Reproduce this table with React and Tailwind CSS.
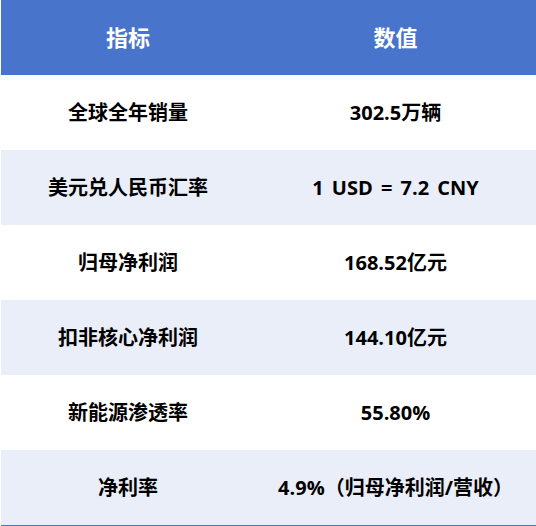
import React from 'react';

const rows = [
  ['全球全年销量', '302.5万辆'],
  ['美元兑人民币汇率', '1 USD = 7.2 CNY'],
  ['归母净利润', '168.52亿元'],
  ['扣非核心净利润', '144.10亿元'],
  ['新能源渗透率', '55.80%'],
  ['净利率', '4.9%（归母净利润/营收）'],
];

export default function App() {
  return (
    <div
      className="w-[536px] h-[526px] bg-white pl-px"
      style={{ fontFamily: '"Open Sans", "Noto Sans CJK SC", sans-serif' }}
    >
      <div className="border-b border-[#4874cb]">
        {/* 表头 */}
        <div className="flex h-[75px] bg-[#4874cb] text-white text-[22px] font-bold">
          <div className="w-[254px] flex items-center justify-center">指标</div>
          <div className="flex-1 flex items-center justify-center">数值</div>
        </div>
        {rows.map(([label, value], i) => (
          <div
            key={label}
            className={`flex h-[75px] text-black text-[20px] font-bold [word-spacing:3px] ${i % 2 === 1 ? 'bg-[#e9eef9]' : 'bg-white'}`}
          >
            <div className="w-[254px] flex items-center justify-center">{label}</div>
            <div className="flex-1 flex items-center justify-center">{value}</div>
          </div>
        ))}
      </div>
    </div>
  );
}
